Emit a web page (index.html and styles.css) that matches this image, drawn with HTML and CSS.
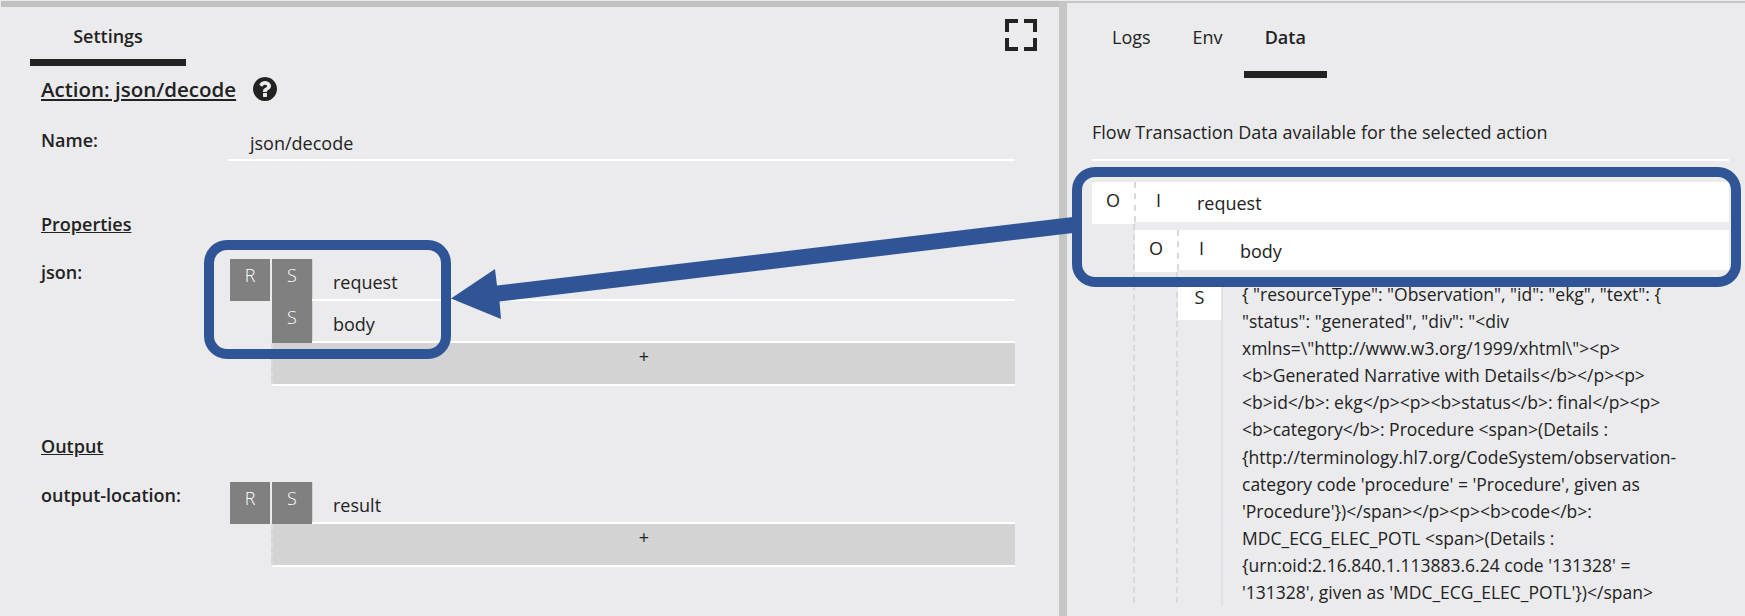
FILE: index.html
```html
<!DOCTYPE html>
<html lang="en">
<head>
  <meta charset="UTF-8">
  <title>Flow Editor - Action Settings</title>
  <link rel="stylesheet" href="styles.css">
</head>
<body>
  <div class="app">
    <section class="settings">
      <div class="settings-top">
        <div class="tabs">
          <div class="tab tab-wide active">Settings</div>
        </div>
        <svg class="expand" viewBox="0 0 32 32" width="32" height="32">
          <path d="M2 13V2H13M19 2H30V13M2 19V30H13M30 19V30H19" fill="none" stroke="#222" stroke-width="4"/>
        </svg>
      </div>

      <div class="form">
        <div class="action-title">
          <h3>Action: json/decode</h3>
          <svg class="help" viewBox="0 128 1536 1536" width="24" height="24">
            <path fill="#222" d="M896 1376v-192q0-14-9-23t-23-9h-192q-14 0-23 9t-9 23v192q0 14 9 23t23 9h192q14 0 23-9t9-23zm256-672q0-88-55.5-163t-138.5-116-170-41q-243 0-371 213-15 24 8 42l132 100q7 6 19 6 16 0 25-12 53-68 86-92 34-24 86-24 48 0 85.5 26t37.5 59q0 38-20 61t-68 45q-63 28-115.5 86.5t-52.5 125.5v36q0 14 9 23t23 9h192q14 0 23-9t9-23q0-19 21.5-49.5t54.5-49.5q32-18 49-28.5t46-35 44.5-48 28-60.5 12.5-81zm384 192q0 209-103 385.5t-279.5 279.5-385.5 103-385.5-103-279.5-279.5-103-385.5 103-385.5 279.5-279.5 385.5-103 385.5 103 279.5 279.5 103 385.5z"/>
          </svg>
        </div>

        <div class="field field-name">
          <label>Name:</label>
          <div class="name-input">json/decode</div>
        </div>

        <h4 class="section section-props">Properties</h4>
        <div class="field field-json">
          <label>json:</label>
          <div class="path">
            <div class="path-row">
              <div class="cell">R</div>
              <div class="cell cell-s">S</div>
              <div class="path-text">request</div>
            </div>
            <div class="path-row path-sub">
              <div class="cell cell-s">S</div>
              <div class="path-text">body</div>
            </div>
            <div class="add-row">+</div>
          </div>
        </div>

        <h4 class="section section-output">Output</h4>
        <div class="field field-output">
          <label>output-location:</label>
          <div class="path">
            <div class="path-row">
              <div class="cell">R</div>
              <div class="cell cell-s">S</div>
              <div class="path-text">result</div>
            </div>
            <div class="add-row">+</div>
          </div>
        </div>
      </div>
    </section>

    <section class="data-panel">
      <div class="tabs">
        <div class="tab">Logs</div>
        <div class="tab">Env</div>
        <div class="tab active">Data</div>
      </div>
      <p class="intro">Flow Transaction Data available for the selected action</p>

      <div class="node">
        <div class="node-row">
          <div class="type">O</div>
          <div class="node-body"><span class="mark">I</span><span>request</span></div>
        </div>
        <div class="children">
          <div class="node">
            <div class="node-row">
              <div class="type">O</div>
              <div class="node-body"><span class="mark">I</span><span>body</span></div>
            </div>
            <div class="children">
              <div class="node-row leaf">
                <div class="type">S</div>
                <div class="leaf-text">
                  { "resourceType": "Observation", "id": "ekg", "text": {<br>
                  "status": "generated", "div": "&lt;div<br>
                  xmlns=\"http://www.w3.org/1999/xhtml\"&gt;&lt;p&gt;<br>
                  &lt;b&gt;Generated Narrative with Details&lt;/b&gt;&lt;/p&gt;&lt;p&gt;<br>
                  &lt;b&gt;id&lt;/b&gt;: ekg&lt;/p&gt;&lt;p&gt;&lt;b&gt;status&lt;/b&gt;: final&lt;/p&gt;&lt;p&gt;<br>
                  &lt;b&gt;category&lt;/b&gt;: Procedure &lt;span&gt;(Details :<br>
                  {http://terminology.hl7.org/CodeSystem/observation-<br>
                  category code 'procedure' = 'Procedure', given as<br>
                  'Procedure'})&lt;/span&gt;&lt;/p&gt;&lt;p&gt;&lt;b&gt;code&lt;/b&gt;:<br>
                  MDC_ECG_ELEC_POTL &lt;span&gt;(Details :<br>
                  {urn:oid:2.16.840.1.113883.6.24 code '131328' =<br>
                  '131328', given as 'MDC_ECG_ELEC_POTL'})&lt;/span&gt;
                </div>
              </div>
            </div>
          </div>
        </div>
      </div>
    </section>
  </div>

  <!-- callout drawn over the screenshot -->
  <svg class="callout" viewBox="0 0 1745 616" width="1745" height="616">
    <rect x="209" y="245" width="237" height="109" rx="18" fill="none" stroke="#2f5597" stroke-width="10"/>
    <rect x="1077" y="172" width="659" height="110" rx="18" fill="none" stroke="#2f5597" stroke-width="10"/>
    <polygon fill="#2f5597" points="1073,217 1073,233 499.5,301.5 501,319 451,298.5 495,269 497,285.5"/>
  </svg>
</body>
</html>
```

FILE: styles.css
```css
* {
  box-sizing: border-box;
}
body {
  margin: 0;
  background: #ebebed;
  color: #222;
  font-family: "Open Sans", "Noto Sans", sans-serif;
  font-size: 18px;
}
.app {
  display: flex;
  width: 1745px;
  height: 616px;
  overflow: hidden;
  padding-top: 1px;
}

/* tabs */
.tabs {
  display: flex;
}
.tab {
  height: 59px;
  padding: 0 21px;
  line-height: 58px;
}
.tab.active {
  font-weight: 600;
  border-bottom: 7px solid #222;
}

/* left panel */
.settings {
  width: 1058px;
  flex: none;
  margin-left: 1px;
  border-top: 6px solid #c0c0c0;
}
.settings-top {
  display: flex;
  justify-content: space-between;
  padding-left: 29px;
  padding-right: 22px;
}
.tab-wide {
  width: 156px;
  padding: 0;
  text-align: center;
}
.expand {
  margin-top: 12px;
}
.form {
  padding-left: 40px;
  width: 1014px;
}
.action-title {
  display: flex;
  align-items: center;
  gap: 17px;
  height: 24px;
  margin-top: 11px;
}
.action-title h3 {
  margin: 0;
  font-size: 20.5px;
  font-weight: 600;
  text-decoration: underline;
}
.field {
  display: grid;
  grid-template-columns: 187px 1fr;
}
.field label {
  font-weight: 600;
}
.field-name {
  margin-top: 23px;
}
.name-input {
  height: 37px;
  padding-left: 22px;
  line-height: 38px;
  border-bottom: 2px solid #fff;
}
.field-name label {
  line-height: 32px;
}
.section {
  margin: 0;
  font-size: 18px;
  font-weight: 600;
  line-height: 20px;
  text-decoration: underline;
}
.section-props {
  margin-top: 53px;
}
.section-output {
  margin-top: 50px;
}
.field-json {
  margin-top: 25px;
}
.field-output {
  margin-top: 26px;
}
.field-json label,
.field-output label {
  line-height: 26px;
}
.path {
  padding-left: 2px;
}
.path-row {
  display: flex;
  height: 42px;
}
.path-sub {
  padding-left: 42px;
}
.cell {
  width: 40px;
  height: 42px;
  flex: none;
  background: #808080;
  color: #fff;
  font-weight: 300;
  text-align: center;
  line-height: 32px;
}
.cell-s {
  margin-left: 2px;
  box-shadow: 1px 0 0 #d4d4d4;
}
.path-sub .cell-s {
  margin-left: 0;
}
.path-text {
  flex: 1;
  padding-left: 21px;
  line-height: 46px;
  border-bottom: 2px solid #fff;
}
.add-row {
  height: 43px;
  margin-left: 41px;
  background: #d3d3d3;
  border-left: 2px dashed #dcdcdc;
  border-bottom: 2px solid #fff;
  text-align: center;
  line-height: 26px;
}

/* right panel */
.data-panel {
  flex: 1;
  border-left: 8px solid #c6c6c6;
  border-top: 2px solid #c6c6c6;
  padding: 0 16px 0 25px;
}
.data-panel .tabs {
  margin-left: -1px;
  height: 75px;
}
.data-panel .tab {
  height: 75px;
  line-height: 68px;
}
.intro {
  margin: 0 0 21px;
  padding-top: 42px;
  line-height: 24px;
}
.intro::after {
  content: "";
  display: block;
  margin-top: 15px;
  border-bottom: 2px solid #fff;
}
.node-row {
  display: flex;
}
.type {
  width: 42px;
  height: 42px;
  flex: none;
  background: #fff;
  text-align: center;
  line-height: 36px;
}
.node-body {
  flex: 1;
  height: 40px;
  display: flex;
  background: #fff;
  border-left: 2px dashed #d9d9d9;
  line-height: 42px;
}
.mark {
  width: 61px;
  padding-left: 20px;
  line-height: 36px;
}
.children {
  margin-left: 41px;
  padding-top: 6px;
  border-left: 2px dashed #d9d9d9;
}
.children .children {
  height: 331px;
}
.leaf .type {
  width: 43px;
  line-height: 38px;
}
.leaf-text {
  flex: 1;
  padding-left: 21px;
  margin-top: 3px;
  font-size: 17.5px;
  line-height: 27.1px;
  white-space: nowrap;
  box-shadow: inset 2px 0 0 #e2e2e2;
}

/* annotation layer */
.callout {
  position: absolute;
  left: 0;
  top: 0;
  pointer-events: none;
}
```
